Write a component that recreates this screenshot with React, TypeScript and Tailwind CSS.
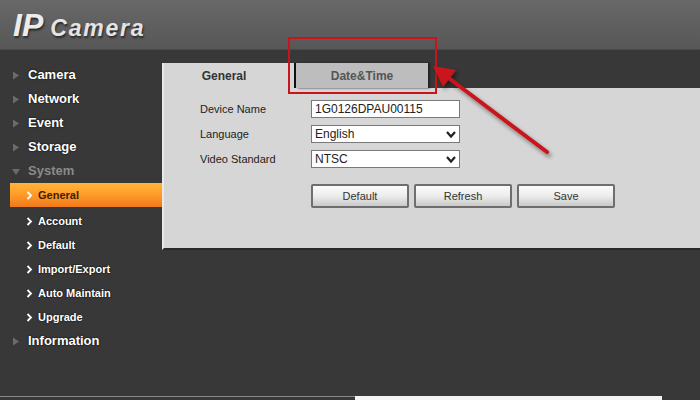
import React from 'react';

const mainItems = ['Camera', 'Network', 'Event', 'Storage'];
const subItems = ['Account', 'Default', 'Import/Export', 'Auto Maintain', 'Upgrade'];

function Tri({ down }: { down?: boolean }) {
  return (
    <svg width="8" height="9" viewBox="0 0 8 9" className="mr-[8px] shrink-0">
      {down ? <path d="M0 2 L8 2 L4 8 Z" fill="#6b6b6b" /> : <path d="M1 0.5 L7 4.5 L1 8.5 Z" fill="#6b6b6b" />}
    </svg>
  );
}

function Chevron({ color }: { color: string }) {
  return (
    <svg width="7" height="9" viewBox="0 0 7 9" className="mr-[5px] shrink-0">
      <path d="M1.5 1 L5 4.5 L1.5 8" fill="none" stroke={color} strokeWidth="1.8" />
    </svg>
  );
}

function SelectBox({ value }: { value: string }) {
  return (
    <div className="w-[149px] h-[18px] bg-white border border-[#7a7a7a] flex items-center justify-between pl-[3px] pr-[2px]">
      <span className="text-[12px] text-[#222]">{value}</span>
      <svg width="12" height="9" viewBox="0 0 12 9">
        <path d="M2 2 L6 6.5 L10 2" fill="none" stroke="#222" strokeWidth="2.2" />
      </svg>
    </div>
  );
}

function Btn({ label }: { label: string }) {
  return (
    <button className="w-[98px] h-[24px] rounded-[2px] border-2 border-[#6e6e6e] bg-linear-to-b from-[#fbfbfb] via-[#ececec] to-[#c9c9c9] text-[11px] text-[#333]">
      {label}
    </button>
  );
}

export default function App() {
  return (
    <div className="relative w-[700px] h-[400px] overflow-hidden bg-[#383838] font-['Liberation_Sans',Arial,sans-serif] flex flex-col">
      {/* header */}
      <div className="h-[50px] shrink-0 bg-linear-to-b from-[#686868] to-[#575757] border-b border-[#4a4a4a] flex items-end pl-[13px] pb-[8px]">
        <span className="italic font-bold text-[32px] leading-none text-[#ececec] [text-shadow:1px_2px_2px_#2a2a2a] tracking-[0px]">IP</span>
        <span className="italic font-bold text-[23px] leading-none text-[#e4e4e4] [text-shadow:1px_2px_2px_#2a2a2a] ml-[7px] mb-[1px] tracking-[1.8px]">Camera</span>
      </div>

      <div className="flex flex-1">
        {/* sidebar */}
        <div className="w-[162px] shrink-0 pt-[13px]">
          {mainItems.map((m) => (
            <div key={m} className="h-[24px] flex items-center pl-[12px]">
              <Tri />
              <span className="text-[13px] font-bold text-white [text-shadow:0_0_2px_#000]">{m}</span>
            </div>
          ))}
          <div className="h-[24px] flex items-center pl-[12px]">
            <Tri down />
            <span className="text-[13px] font-bold text-[#8a8a8a]">System</span>
          </div>
          <div className="h-[24px] ml-[10px] flex items-center pl-[16px] bg-linear-to-b from-[#ffb53a] via-[#ff9a28] to-[#f0781c]">
            <Chevron color="#fff" />
            <span className="text-[11px] text-[#3a2200] font-bold">General</span>
          </div>
          {subItems.map((s) => (
            <div key={s} className="h-[24px] flex items-center pl-[26px] pt-[4px]">
              <Chevron color="#fff" />
              <span className="text-[11px] font-bold text-white [text-shadow:0_0_2px_#000]">{s}</span>
            </div>
          ))}
          <div className="h-[24px] flex items-center pl-[12px] pt-[4px]">
            <Tri />
            <span className="text-[13px] font-bold text-white [text-shadow:0_0_2px_#000]">Information</span>
          </div>
        </div>

        {/* content */}
        <div className="flex-1 pt-[13px]">
          <div className="flex h-[25px]">
            <div className="w-[132px] bg-[#d6d6d6] border-l-2 border-[#e8e8e8] flex items-center justify-center">
              <span className="text-[12px] font-bold text-[#333] ml-[-10px]">General</span>
            </div>
            <div className="w-[2px] bg-[#111]" />
            <div className="w-[132px] bg-[#bdbdbd] flex items-center justify-center shadow-[2px_0_2px_#222]">
              <span className="text-[12px] font-bold text-[#555]">Date&amp;Time</span>
            </div>
          </div>
          <div className="h-[162px] bg-[#d6d6d6] border-l-2 border-[#e8e8e8] border-b-2 border-b-[#2a2a2a] pt-[12px] pl-[36px]">
            <div className="flex flex-col gap-[7px]">
              <div className="flex items-center h-[18px]">
                <span className="w-[111px] text-[11px] text-[#222]">Device Name</span>
                <div className="w-[149px] h-[18px] bg-white border border-[#7a7a7a] flex items-center pl-[3px]">
                  <span className="text-[12px] text-[#222]">1G0126DPAU00115</span>
                </div>
              </div>
              <div className="flex items-center h-[18px]">
                <span className="w-[111px] text-[11px] text-[#222]">Language</span>
                <SelectBox value="English" />
              </div>
              <div className="flex items-center h-[18px]">
                <span className="w-[111px] text-[11px] text-[#222]">Video Standard</span>
                <SelectBox value="NTSC" />
              </div>
            </div>
            <div className="flex gap-[5px] ml-[111px] mt-[16px]">
              <Btn label="Default" />
              <Btn label="Refresh" />
              <Btn label="Save" />
            </div>
          </div>
        </div>
      </div>

      {/* bottom strip */}
      <div className="h-[4px] shrink-0 flex">
        <div className="w-[355px] border-t border-[#8a8a8a]" />
        <div className="w-[307px] bg-[#f4f4f4]" />
      </div>

      {/* annotation overlay */}
      <div className="absolute left-[288px] top-[37px] w-[149px] h-[57px] border-2 border-[#c8141a]" />
      <svg className="absolute left-0 top-0 pointer-events-none" width="700" height="400" viewBox="0 0 700 400">
        <defs>
          <filter id="sh" x="-20%" y="-20%" width="140%" height="140%">
            <feDropShadow dx="2" dy="3" stdDeviation="2" floodColor="#000" floodOpacity="0.45" />
          </filter>
        </defs>
        <g filter="url(#sh)">
          <line x1="547" y1="152" x2="446" y2="76" stroke="#c8141a" strokeWidth="4" strokeLinecap="round" />
          <path d="M433 66 L456 70 L443 87 Z" fill="#c8141a" />
        </g>
      </svg>
    </div>
  );
}
